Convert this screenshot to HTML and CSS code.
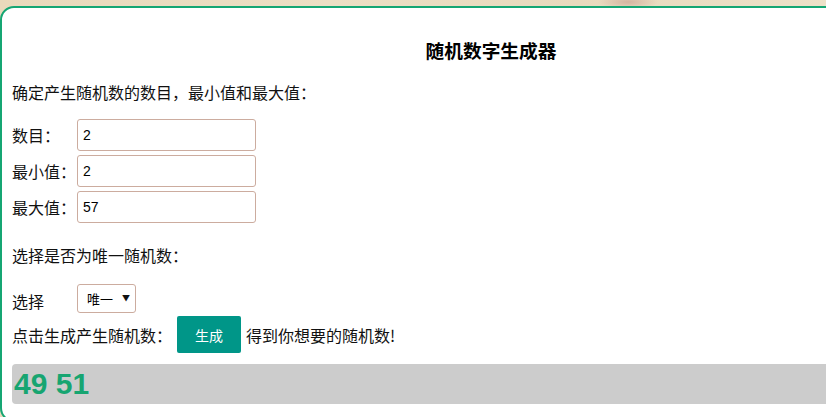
FILE: index.html
```html
<!DOCTYPE html>
<html lang="zh-CN">
<head>
<meta charset="utf-8">
<title>随机数字生成器</title>
<link rel="stylesheet" href="styles.css">
</head>
<body>
  <div class="card">
    <h3 class="title">随机数字生成器</h3>
    <p class="text intro">确定产生随机数的数目，最小值和最大值：</p>
    <div class="fields">
      <label class="row"><span class="label">数目：</span><input class="field" type="text" value="2"></label>
      <label class="row"><span class="label">最小值：</span><input class="field" type="text" value="2"></label>
      <label class="row"><span class="label">最大值：</span><input class="field" type="text" value="57"></label>
    </div>
    <p class="text unique">选择是否为唯一随机数：</p>
    <div class="row choose">
      <span class="label">选择</span>
      <span class="select-wrap">
        <select class="select">
          <option>唯一</option>
          <option>不唯一</option>
        </select>
        <span class="caret">▼</span>
      </span>
    </div>
    <div class="row gen">
      <span class="text">点击生成产生随机数：</span>
      <button class="btn" type="button">生成</button>
      <span class="text">得到你想要的随机数!</span>
    </div>
    <div class="result">49 51</div>
  </div>
</body>
</html>
```

FILE: styles.css
```css
html, body {
  margin: 0;
  padding: 0;
}

body {
  width: 826px;
  height: 417px;
  overflow: hidden;
  background:
    radial-gradient(ellipse 30px 8px at 628px 2px, #d4b4a0 0%, rgba(212, 180, 160, 0) 100%),
    linear-gradient(90deg, #e9d9bb 0%, #ecdfc4 40%, #e8dabd 70%, #ede1c8 100%);
  font-family: "Noto Sans CJK SC", "Liberation Sans", sans-serif;
  font-size: 16px;
  color: #111;
}

/* the card is wider than the window; its right side is cut off */
.card {
  box-sizing: border-box;
  width: 982px;
  margin-top: 6px;
  padding: 30px 10px 16px;
  background: #fff;
  border: 2px solid #15a673;
  border-radius: 14px;
  display: flex;
  flex-direction: column;
}

.title {
  margin: 0;
  font-size: 18.7px;
  line-height: 24px;
  font-weight: 700;
  text-align: center;
  color: #000;
}

.text {
  margin: 0;
  line-height: 24px;
}

.intro {
  margin-top: 18px;
}

.fields {
  margin-top: 15px;
  display: flex;
  flex-direction: column;
  gap: 4px;
}

.row {
  display: flex;
  align-items: center;
}

.label {
  width: 65px;
  line-height: 24px;
}

.field {
  box-sizing: border-box;
  width: 179px;
  height: 32px;
  margin: 0;
  padding: 0 5px;
  border: 1px solid #ccac9f;
  border-radius: 3px;
  font-family: "Liberation Sans", sans-serif;
  font-size: 14px;
  color: #000;
  background: #fff;
  outline: none;
}

.unique {
  margin-top: 20px;
}

.choose {
  margin-top: 17px;
}

.choose .label {
  padding-top: 5px;
}

.select-wrap {
  position: relative;
  display: inline-block;
}

.select {
  box-sizing: border-box;
  width: 59px;
  height: 29px;
  margin: 0;
  padding: 0 0 0 9px;
  border: 1px solid #ccac9f;
  border-radius: 3px;
  background: #fff;
  font-family: "Noto Sans CJK SC", sans-serif;
  font-size: 13px;
  color: #000;
  appearance: none;
  -webkit-appearance: none;
  outline: none;
}

.caret {
  position: absolute;
  right: 6px;
  top: 8px;
  font-size: 8px;
  line-height: 12px;
  color: #111;
  pointer-events: none;
}

.gen {
  margin-top: 3px;
  gap: 5px;
}

.btn {
  box-sizing: border-box;
  width: 64px;
  height: 37px;
  margin: 0;
  padding: 0;
  border: none;
  border-radius: 2px;
  background: #009688;
  color: #fff;
  font-family: "Noto Sans CJK SC", sans-serif;
  font-size: 14px;
}

.result {
  margin-top: 11px;
  margin-right: -10px;
  height: 40px;
  padding-left: 2px;
  background: #cccccc;
  border-radius: 4px 0 0 4px;
  font-family: "Liberation Sans", sans-serif;
  font-size: 30px;
  font-weight: 700;
  line-height: 40px;
  color: #17a571;
}
```
